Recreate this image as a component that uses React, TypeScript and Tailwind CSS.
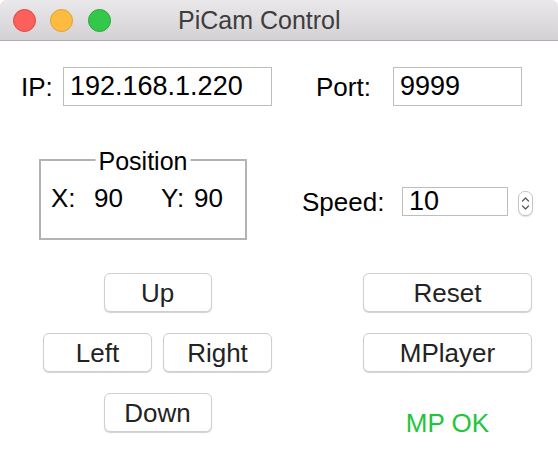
import React from "react";

function Btn({ label, w }: { label: string; w: string }) {
  return (
    <div
      className={`${w} h-[39px] flex items-center justify-center rounded-[6px] border border-[#cfcfcf] bg-white shadow-[0_1px_1px_rgba(0,0,0,0.18)] text-[26px] leading-none text-[#232323]`}
    >
      {label}
    </div>
  );
}

export default function App() {
  return (
    <div className="w-[558px] h-[462px] bg-white overflow-hidden font-['Liberation_Sans',Arial,sans-serif] text-black">
      {/* Title bar */}
      <div className="h-[41px] flex items-center bg-gradient-to-b from-[#eae8ea] to-[#d3d1d3] border-b border-[#afadaf] rounded-t-[6px]">
        <div className="ml-[13px] w-[23px] h-[23px] rounded-full bg-[#fc605c] border border-[#e0443e]" />
        <div className="ml-[14px] w-[23px] h-[23px] rounded-full bg-[#fdbc40] border border-[#de9f34]" />
        <div className="ml-[15px] w-[23px] h-[23px] rounded-full bg-[#34c84a] border border-[#27a83a]" />
        <div className="ml-[67px] text-[25px] leading-none text-[#3d3d3d]">PiCam Control</div>
      </div>

      {/* Row 1 */}
      <div className="mt-[26px] flex items-center h-[39px]">
        <span className="ml-[21px] w-[42px] text-[26px] leading-none">IP:</span>
        <input
          readOnly
          value="192.168.1.220"
          className="w-[209px] h-[39px] border border-[#bdbdbd] pl-[6px] text-[27px] leading-none text-black outline-none"
        />
        <span className="ml-[44px] w-[77px] text-[26px] leading-none">Port:</span>
        <input
          readOnly
          value="9999"
          className="w-[129px] h-[39px] border border-[#bdbdbd] pl-[6px] text-[27px] leading-none text-black outline-none"
        />
      </div>

      {/* Row 2 */}
      <div className="mt-[53px] flex items-start">
        <div className="relative ml-[39px] w-[208px] h-[81px] border-2 border-[#b3b3b3]">
          <span className="absolute left-1/2 -translate-x-1/2 -top-[15px] bg-white px-[3px] text-[25px] leading-[30px] whitespace-nowrap">
            Position
          </span>
          <div className="flex pl-[10px] pt-[22px] text-[26px] leading-[30px] whitespace-nowrap">
            <span className="w-[43px]">X:</span>
            <span className="w-[67px]">90</span>
            <span className="w-[33px]">Y:</span>
            <span>90</span>
          </div>
        </div>
        <div className="ml-[55px] mt-[28px] flex items-center">
          <span className="w-[100px] text-[26px] leading-none">Speed:</span>
          <input
            readOnly
            value="10"
            className="w-[106px] h-[29px] border border-[#bdbdbd] pl-[6px] text-[27px] leading-none text-black outline-none"
          />
          <div className="ml-[10px] mt-[3px] w-[15px] h-[25px] rounded-[7px] border border-[#c4c4c4] bg-white shadow-[0_1px_1px_rgba(0,0,0,0.12)] flex items-center justify-center">
            <svg width="9" height="17" viewBox="0 0 9 17" fill="none" stroke="#555" strokeWidth="1.2" strokeLinecap="round" strokeLinejoin="round">
              <path d="M1.5 6 L4.5 3 L7.5 6" />
              <path d="M1.5 11 L4.5 14 L7.5 11" />
            </svg>
          </div>
        </div>
      </div>

      {/* Row 3 */}
      <div className="mt-[33px] flex items-start">
        <div className="ml-[43px] w-[229px] flex flex-col items-center gap-[21px]">
          <Btn label="Up" w="w-[108px]" />
          <div className="flex gap-[11px]">
            <Btn label="Left" w="w-[109px]" />
            <Btn label="Right" w="w-[109px]" />
          </div>
          <Btn label="Down" w="w-[108px]" />
        </div>
        <div className="ml-[91px] w-[169px] flex flex-col items-center">
          <Btn label="Reset" w="w-[169px]" />
          <div className="mt-[21px]">
            <Btn label="MPlayer" w="w-[169px]" />
          </div>
          <div className="mt-[36px] text-[26px] leading-[30px] text-[#1ec63a]">MP OK</div>
        </div>
      </div>
    </div>
  );
}
